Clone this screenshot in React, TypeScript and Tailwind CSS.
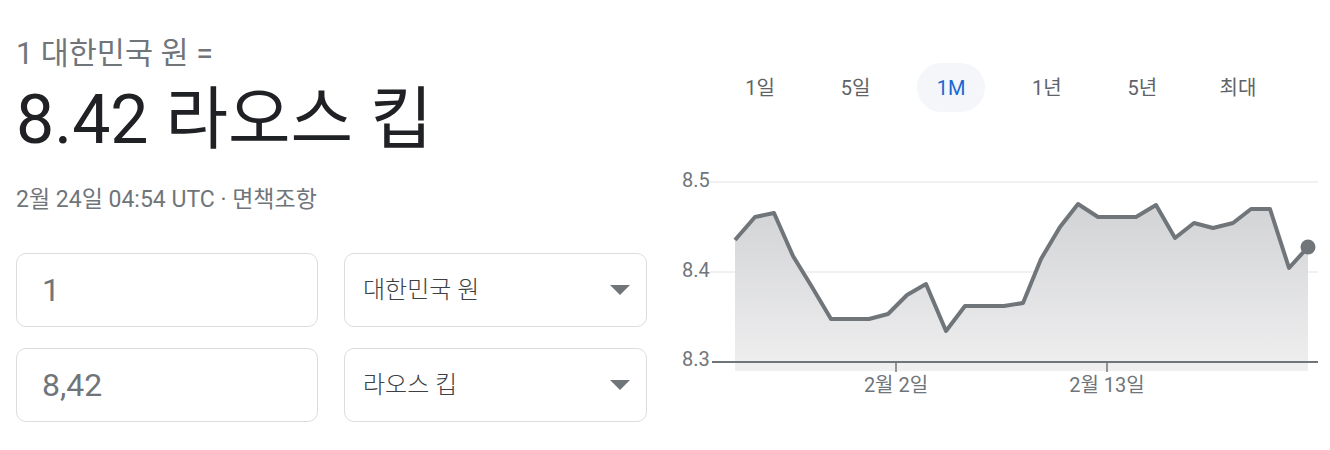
import React from "react";

const font = "font-['Roboto','Noto_Sans_CJK_KR',sans-serif]";

const tabs = ["1일", "5일", "1M", "1년", "5년", "최대"];

// chart points in svg coords (svg origin = 670,160 on the page)
const points: [number, number][] = [
  [65, 80], [85, 57], [104, 53], [123, 96], [142, 127], [161, 159], [180, 159],
  [199, 159], [218, 154], [237, 135], [256, 124], [276, 171], [295, 146],
  [314, 146], [334, 146], [353, 143], [371, 99], [390, 67], [408, 44],
  [428, 57], [447, 57], [466, 57], [486, 45], [505, 78], [524, 63],
  [543, 68], [563, 63], [581, 49], [600, 49], [619, 108], [638, 87],
];

function Chart() {
  const line = points.map(([x, y]) => `${x},${y}`).join(" ");
  const area = `65,211 ${line} 638,211`;
  const last = points[points.length - 1];
  const fontFamily = "Roboto, 'Noto Sans CJK KR', sans-serif";

  return (
    <svg width="660" height="250" viewBox="0 0 660 250" className="block">
      <defs>
        <linearGradient id="fill" x1="0" y1="44" x2="0" y2="211" gradientUnits="userSpaceOnUse">
          <stop offset="0" stopColor="#d2d3d5" />
          <stop offset="1" stopColor="#efeff0" />
        </linearGradient>
      </defs>
      <line x1="40" y1="22" x2="648" y2="22" stroke="#ececec" strokeWidth="1.5" />
      <line x1="40" y1="112" x2="648" y2="112" stroke="#ececec" strokeWidth="1.5" />
      <polygon points={area} fill="url(#fill)" />
      <polyline points={line} fill="none" stroke="#70757a" strokeWidth="4" strokeLinejoin="round" />
      <circle cx={last[0]} cy={last[1]} r="7.5" fill="#70757a" />
      <line x1="42" y1="202" x2="648" y2="202" stroke="#70757a" strokeWidth="2" />
      <line x1="226" y1="202" x2="226" y2="212" stroke="#70757a" strokeWidth="1.5" />
      <line x1="437" y1="202" x2="437" y2="212" stroke="#70757a" strokeWidth="1.5" />
      <g fill="#70757a" fontFamily={fontFamily} fontSize="20">
        <text x="12" y="22" dominantBaseline="middle">8.5</text>
        <text x="12" y="112" dominantBaseline="middle">8.4</text>
        <text x="12" y="201" dominantBaseline="middle">8.3</text>
        <text x="226" y="227" textAnchor="middle" dominantBaseline="middle">2월 2일</text>
        <text x="437" y="227" textAnchor="middle" dominantBaseline="middle">2월 13일</text>
      </g>
    </svg>
  );
}

function Caret() {
  return (
    <svg width="20" height="10" viewBox="0 0 20 10">
      <path d="M0 0 L20 0 L10 10 Z" fill="#70757a" />
    </svg>
  );
}

export default function App() {
  return (
    <div className={`flex h-[450px] w-[1330px] bg-white ${font}`}>
      <div className="w-[670px] pl-4">
        <div className="mt-[36px] h-[36px] text-[30.5px] leading-[36px] text-[#70757a]">
          1 대한민국 원 =
        </div>
        <div className="mt-[10px] h-[76px] text-[68px] leading-[76px] text-[#202124]">
          8.42 라오스 킵
        </div>
        <div className="mt-[28px] h-[28px] text-[23px] leading-[28px] text-[#70757a]">
          2월 24일 04:54 UTC · 면책조항
        </div>
        <div className="mt-[39px] grid grid-cols-[302px_303px] gap-x-[26px] gap-y-[21px]">
          <div className="flex h-[74px] items-center rounded-[10px] border border-[#dadce0] pl-[25px] text-[32px] text-[#70757a]">
            1
          </div>
          <div className="flex h-[74px] items-center justify-between rounded-[10px] border border-[#dadce0] pl-[18px] pr-[16px] text-[24px] font-light text-[#3c4043]">
            <span>대한민국 원</span>
            <Caret />
          </div>
          <div className="flex h-[74px] items-center rounded-[10px] border border-[#dadce0] pl-[25px] text-[32px] text-[#70757a]">
            8,42
          </div>
          <div className="flex h-[74px] items-center justify-between rounded-[10px] border border-[#dadce0] pl-[18px] pr-[16px] text-[24px] font-light text-[#3c4043]">
            <span>라오스 킵</span>
            <Caret />
          </div>
        </div>
      </div>
      <div className="w-[660px]">
        <div className="mt-[63px] flex gap-[27.6px] pl-[56px]">
          {tabs.map((t) => (
            <div
              key={t}
              className={`flex h-[49px] w-[68px] items-center justify-center rounded-full text-[20px] ${
                t === "1M" ? "bg-[#f4f6fa] text-[#1a67d2]" : "text-[#5f6368]"
              }`}
            >
              {t}
            </div>
          ))}
        </div>
        <div className="mt-[48px]">
          <Chart />
        </div>
      </div>
    </div>
  );
}
